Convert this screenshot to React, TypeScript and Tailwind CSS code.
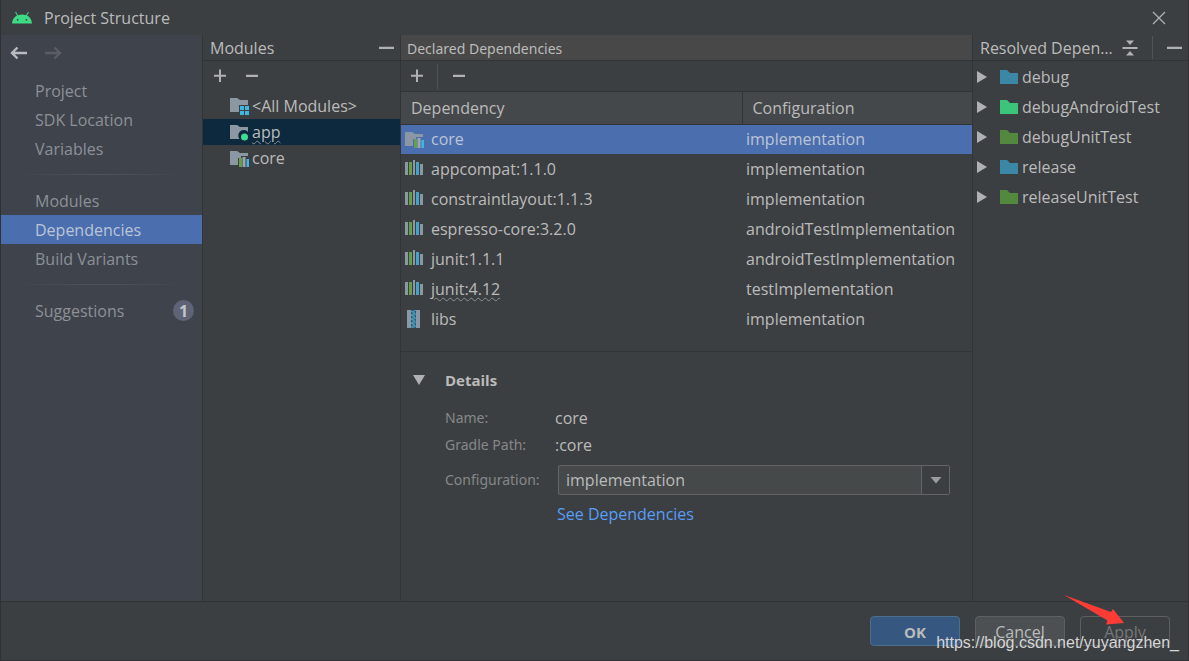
import { useState } from "react";
import type { ReactNode } from "react";

function AndroidLogo() {
  return (
    <svg width="20" height="14" viewBox="0 0 20 14" aria-hidden="true">
      <path d="M0 12.5C0.3 8.8 2.3 6 5 4.6L3.1 1.3L4 0.8L6 4.2C8.4 3.2 11.6 3.2 14 4.2L16 0.8L16.9 1.3L15 4.6C17.7 6 19.7 8.8 20 12.5Z" fill="#3ddc84" />
      <circle cx="5.6" cy="8.8" r="0.9" fill="#3c3f41" />
      <circle cx="14.4" cy="8.8" r="0.9" fill="#3c3f41" />
    </svg>
  );
}

function ArrowIcon({ forward = false }: { forward?: boolean }) {
  return (
    <svg width="18" height="14" viewBox="0 0 18 14" fill="none" stroke="currentColor" strokeWidth="2.4" aria-hidden="true">
      <path d={forward ? "M1 7H16M10.5 1.5L16 7L10.5 12.5" : "M17 7H2M7.5 1.5L2 7L7.5 12.5"} />
    </svg>
  );
}

function PlusIcon() {
  return (
    <svg width="14" height="14" viewBox="0 0 14 14" fill="#afb1b3" aria-hidden="true">
      <path d="M6 0.5H8V5.75H13V7.75H8V13H6V7.75H1V5.75H6Z" />
    </svg>
  );
}

function MinusIcon({ wide = false }: { wide?: boolean }) {
  return (
    <svg width="16" height="14" viewBox="0 0 16 14" fill="#afb1b3" aria-hidden="true">
      <rect x={wide ? 0 : 2} y="5.75" width={wide ? 15 : 12} height="2.25" />
    </svg>
  );
}

function CollapseIcon() {
  return (
    <svg width="16" height="16" viewBox="0 0 16 16" fill="#afb1b3" aria-hidden="true">
      <path d="M4 0.5H12L8 5ZM0.5 7H15.5V9H0.5ZM4 15.5H12L8 11Z" />
    </svg>
  );
}

const folderPath = "M0 1H7L10 4H18V15H0Z";

function ModuleIcon({ kind }: { kind: "all" | "app" | "library" }) {
  return (
    <svg width="20" height="18" viewBox="0 0 20 18" className="shrink-0" aria-hidden="true">
      {kind === "all" && (
        <>
          <path d="M0 1H7L10 3H18V8H9V15H0Z" fill="#8b98a3" />
          <path d="M10 9H14V13H10ZM15 9H19V13H15ZM10 14H14V18H10ZM15 14H19V18H15Z" fill="#40b6e0" />
        </>
      )}
      {kind === "app" && (
        <>
          <path d="M0 2H7L10 4H18V9A5 5 0 0 0 9.5 16H0Z" fill="#8b98a3" />
          <circle cx="14.5" cy="14" r="3.5" fill="#3fdc95" />
        </>
      )}
      {kind === "library" && (
        <>
          <path d="M0 2H7L10 4H18V7H11V9H8V16H0Z" fill="#8b98a3" />
          <rect x="9" y="9" width="3" height="9" fill="#62a04c" />
          <rect x="12.5" y="8" width="3" height="10" fill="#9aa7b0" />
          <rect x="16.5" y="10" width="2.5" height="8" fill="#40b6e0" />
        </>
      )}
    </svg>
  );
}

function LibraryIcon() {
  return (
    <svg width="20" height="18" viewBox="0 0 20 18" className="shrink-0" aria-hidden="true">
      <rect x="0" y="2" width="3" height="13" fill="#8b98a3" />
      <rect x="4" y="2" width="3" height="13" fill="#62a04c" />
      <rect x="8" y="0" width="2" height="15" fill="#8b98a3" />
      <rect x="11" y="2" width="3" height="13" fill="#45a3c7" />
      <rect x="15" y="4" width="3" height="11" fill="#8b98a3" />
    </svg>
  );
}

function ArchiveIcon() {
  return (
    <svg width="20" height="18" viewBox="0 0 20 18" className="shrink-0" aria-hidden="true">
      <rect x="2" y="0" width="4" height="18" fill="#8b98a3" />
      <rect x="11" y="0" width="4" height="18" fill="#8b98a3" />
      <rect x="6" y="0" width="5" height="18" fill="#33596d" />
      <path d="M6 1L10 3L6 5L10 7L6 9L10 11L6 13L10 15L6 17M11 0L7 2M11 4L7 6M11 8L7 10M11 12L7 14M11 16L7 18" stroke="#48a5cd" fill="none" />
    </svg>
  );
}

function NavItem({ label, selected = false, onClick, badge }: { label: string; selected?: boolean; onClick: () => void; badge?: ReactNode }) {
  return (
    <button
      type="button"
      onClick={onClick}
      className={`flex h-[29px] w-full shrink-0 items-center justify-between pr-2 pl-[34px] text-left ${selected ? "bg-[#4b6eaf] text-[#bbc5d6]" : "text-[#8c9197]"}`}
    >
      {label}
      {badge}
    </button>
  );
}

function Divider() {
  return <div className="mx-4 my-[11px] h-px shrink-0 bg-linear-to-r from-transparent via-[#50555d] to-transparent" />;
}

const modules = [
  { name: "<All Modules>", kind: "all" as const },
  { name: "app", kind: "app" as const },
  { name: "core", kind: "library" as const },
];

const dependencies = [
  { name: "core", configuration: "implementation", kind: "module" },
  { name: "appcompat:1.1.0", configuration: "implementation", kind: "library" },
  { name: "constraintlayout:1.1.3", configuration: "implementation", kind: "library" },
  { name: "espresso-core:3.2.0", configuration: "androidTestImplementation", kind: "library" },
  { name: "junit:1.1.1", configuration: "androidTestImplementation", kind: "library" },
  { name: "junit:4.12", configuration: "testImplementation", kind: "library", warning: true },
  { name: "libs", configuration: "implementation", kind: "archive" },
];

const variants = [
  { name: "debug", color: "#3d87a6" },
  { name: "debugAndroidTest", color: "#3dc47b" },
  { name: "debugUnitTest", color: "#53893e" },
  { name: "release", color: "#3d87a6" },
  { name: "releaseUnitTest", color: "#53893e" },
];

const wavy = "underline decoration-[#8d8f90] decoration-wavy decoration-1 underline-offset-2";

export default function App() {
  const [page, setPage] = useState("Dependencies");
  const [module, setModule] = useState("app");
  const [selected, setSelected] = useState("core");

  return (
    <div className="flex min-h-screen flex-col border-x border-b border-[#2f3133] bg-[#3c3f41] font-['Open_Sans','Noto_Sans',sans-serif] text-[16px] leading-5 text-[#bbbbbb]">
      <header className="flex h-[35px] shrink-0 items-center pr-[22px] pl-[11px]">
        <AndroidLogo />
        <h1 className="ml-3">Project Structure</h1>
        <button type="button" aria-label="Close" className="ml-auto">
          <svg width="14" height="14" viewBox="0 0 14 14" stroke="#afb1b3" strokeWidth="1.3" aria-hidden="true">
            <path d="M1 1L13 13M13 1L1 13" />
          </svg>
        </button>
      </header>

      <main className="flex min-w-0 flex-1">
        <nav className="flex w-[202px] shrink-0 flex-col border-r border-[#323537] bg-[#3f434c]">
          <div className="mb-[6px] flex h-[35px] shrink-0 items-center gap-4 pl-[9px]">
            <button type="button" aria-label="Back" className="text-[#b9bbbe]"><ArrowIcon /></button>
            <button type="button" aria-label="Forward" disabled className="text-[#5a5d63]"><ArrowIcon forward /></button>
          </div>
          {["Project", "SDK Location", "Variables"].map((n) => (
            <NavItem key={n} label={n} selected={page === n} onClick={() => setPage(n)} />
          ))}
          <Divider />
          {["Modules", "Dependencies", "Build Variants"].map((n) => (
            <NavItem key={n} label={n} selected={page === n} onClick={() => setPage(n)} />
          ))}
          <Divider />
          <NavItem
            label="Suggestions"
            selected={page === "Suggestions"}
            onClick={() => setPage("Suggestions")}
            badge={<span className="flex size-[21px] items-center justify-center rounded-full bg-[#5e6475] font-bold text-[#c3c6cc]">1</span>}
          />
        </nav>

        <section className="flex w-[198px] shrink-0 flex-col border-r border-[#323537]">
          <div className="flex h-[26px] shrink-0 items-center justify-between border-b border-[#323537] pr-[5px] pl-[7px]">
            <h2>Modules</h2>
            <button type="button" aria-label="Hide modules"><MinusIcon wide /></button>
          </div>
          <div className="flex h-8 shrink-0 items-center gap-[17px] pb-0.5 pl-[10px]">
            <button type="button" aria-label="Add module"><PlusIcon /></button>
            <button type="button" aria-label="Remove module"><MinusIcon /></button>
          </div>
          <ul>
            {modules.map((m) => (
              <li key={m.name}>
                <button
                  type="button"
                  onClick={() => setModule(m.name)}
                  className={`flex h-[26px] w-full items-center gap-[2px] pl-[27px] text-left ${module === m.name ? "bg-[#0d293e]" : ""}`}
                >
                  <ModuleIcon kind={m.kind} />
                  <span className={m.name === "app" ? wavy : ""}>{m.name}</span>
                </button>
              </li>
            ))}
          </ul>
        </section>

        <section className="flex min-w-0 flex-1 flex-col border-r border-[#323537]">
          <h2 className="flex h-[26px] shrink-0 items-center border-b border-[#323537] bg-[#484848] pt-0.5 pl-[6px] font-['Noto_Sans',sans-serif] text-[14px]">Declared Dependencies</h2>
          <div className="flex h-[31px] shrink-0 items-center border-b border-[#323537] pl-[9px]">
            <button type="button" aria-label="Add dependency"><PlusIcon /></button>
            <span className="mr-[13px] ml-[13px] h-[25px] w-px bg-[#515355]" />
            <button type="button" aria-label="Remove dependency"><MinusIcon /></button>
          </div>
          <table className="w-full table-fixed border-collapse text-left">
            <thead>
              <tr className="h-8 border-b border-[#323537] bg-[#45484a]">
                <th className="w-[341px] border-r border-[#323537] p-0 pl-[10px] font-normal">Dependency</th>
                <th className="p-0 pl-[10px] font-normal">Configuration</th>
              </tr>
            </thead>
            <tbody>
              {dependencies.map((d) => (
                <tr
                  key={d.name}
                  onClick={() => setSelected(d.name)}
                  className={`h-[30px] ${selected === d.name ? "bg-[#4b6eaf] text-[#bbc5d6]" : ""}`}
                >
                  <td className="p-0 pl-1">
                    <div className="flex items-center gap-[6px]">
                      {d.kind === "module" && <ModuleIcon kind="library" />}
                      {d.kind === "library" && <LibraryIcon />}
                      {d.kind === "archive" && <ArchiveIcon />}
                      <span className={d.warning ? wavy : ""}>{d.name}</span>
                    </div>
                  </td>
                  <td className="p-0 pl-1">{d.configuration}</td>
                </tr>
              ))}
            </tbody>
          </table>

          <div className="mt-[17px] border-t border-[#323537] pt-[18px] pr-[22px] pl-3">
            <h3>
              <button type="button" className="flex items-center gap-5 text-[15px] font-bold">
                <svg width="12" height="10" viewBox="0 0 12 10" fill="#afb1b3" aria-hidden="true"><path d="M0 0H12L6 10Z" /></svg>
                Details
              </button>
            </h3>
            <dl className="mt-4 ml-8 grid grid-cols-[110px_1fr] gap-y-[3px] leading-6">
              <dt className="font-['Noto_Sans',sans-serif] text-[14px] text-[#85888a]">Name:</dt>
              <dd>core</dd>
              <dt className="font-['Noto_Sans',sans-serif] text-[14px] text-[#85888a]">Gradle Path:</dt>
              <dd>:core</dd>
            </dl>
            <div className="mt-2 ml-8 grid grid-cols-[113px_1fr] items-center">
              <label htmlFor="configuration" className="font-['Noto_Sans',sans-serif] text-[14px] text-[#85888a]">Configuration:</label>
              <div className="relative">
                <select id="configuration" defaultValue="implementation" className="h-[30px] w-full appearance-none rounded-[2px] border border-[#646464] bg-[#45494a] pr-8 pl-[7px] text-[#bbbbbb]">
                  <option>implementation</option>
                  <option>androidTestImplementation</option>
                  <option>testImplementation</option>
                </select>
                <span className="pointer-events-none absolute inset-y-px right-px flex w-7 items-center justify-center border-l border-[#646464] bg-[#3c3f41]">
                  <svg width="12" height="8" viewBox="0 0 12 8" fill="#9b9d9f" aria-hidden="true"><path d="M0.5 1H11.5L6 7.5Z" /></svg>
                </span>
              </div>
            </div>
            <a href="#dependencies" className="mt-[9px] ml-36 inline-block text-[#589df6]">See Dependencies</a>
          </div>
        </section>

        <section className="flex w-[215px] shrink-0 flex-col">
          <div className="flex h-[26px] shrink-0 items-center border-b border-[#323537] pl-[7px]">
            <h2 className="w-[138px] truncate">Resolved Dependencies</h2>
            <button type="button" aria-label="Collapse all" className="ml-1"><CollapseIcon /></button>
            <span className="mx-[14px] h-[23px] w-px bg-[#515355]" />
            <button type="button" aria-label="Hide resolved dependencies"><MinusIcon wide /></button>
          </div>
          <ul className="pt-px">
            {variants.map((v) => (
              <li key={v.name}>
                <button type="button" className="flex h-[30px] w-full items-center pl-1 text-left">
                  <svg width="10" height="12" viewBox="0 0 10 12" fill="#afb1b3" aria-hidden="true"><path d="M0 0L10 6L0 12Z" /></svg>
                  <svg width="18" height="16" viewBox="0 0 18 16" fill={v.color} className="mr-1 ml-[13px]" aria-hidden="true"><path d={folderPath} /></svg>
                  {v.name}
                </button>
              </li>
            ))}
          </ul>
        </section>
      </main>

      <footer className="relative flex h-[59px] shrink-0 items-center justify-end gap-[15px] border-t border-[#2f3133] pr-[18px]">
        <button type="button" className="h-[30px] w-[90px] rounded-[4px] border border-[#4c708c] bg-[#365880] pt-0.5 text-[15px] font-bold">OK</button>
        <button type="button" className="h-[30px] w-[90px] rounded-[4px] border border-[#5e6060] bg-[#4c5052] pt-0.5">Cancel</button>
        <button type="button" disabled className="h-[30px] w-[90px] rounded-[4px] border border-[#5e6060] pt-0.5 text-[#777777]">Apply</button>
        <svg width="62" height="32" viewBox="0 0 62 32" className="pointer-events-none absolute -top-2 right-[63px]" aria-hidden="true">
          <path d="M1 1L48 18L50 15L61 29L43 30.5L44.5 26.5Z" fill="#ff3b36" />
        </svg>
        <span className="pointer-events-none absolute right-[9px] bottom-[7px] font-['Liberation_Sans',sans-serif] text-[16px] text-[#d5d6d7]">https://blog.csdn.net/yuyangzhen_</span>
      </footer>
    </div>
  );
}
